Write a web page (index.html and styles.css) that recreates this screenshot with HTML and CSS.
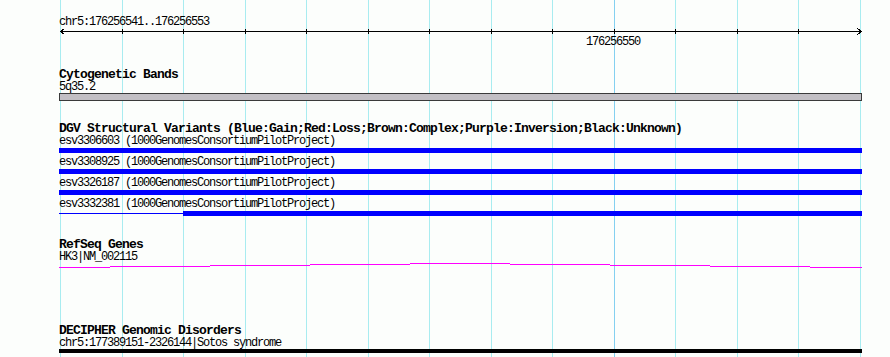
FILE: index.html
```html
<!DOCTYPE html>
<html>
<head>
<meta charset="utf-8">
<title>GBrowse tracks</title>
<link rel="stylesheet" href="styles.css">
</head>
<body>
<div class="page">
  <svg class="grid" width="890" height="357" shape-rendering="crispEdges">
    <g class="minor">
      <line x1="60.5" y1="0" x2="60.5" y2="357"/>
      <line x1="122.5" y1="0" x2="122.5" y2="357"/>
      <line x1="183.5" y1="0" x2="183.5" y2="357"/>
      <line x1="245.5" y1="0" x2="245.5" y2="357"/>
      <line x1="306.5" y1="0" x2="306.5" y2="357"/>
      <line x1="368.5" y1="0" x2="368.5" y2="357"/>
      <line x1="429.5" y1="0" x2="429.5" y2="357"/>
      <line x1="491.5" y1="0" x2="491.5" y2="357"/>
      <line x1="552.5" y1="0" x2="552.5" y2="357"/>
      <line x1="675.5" y1="0" x2="675.5" y2="357"/>
      <line x1="737.5" y1="0" x2="737.5" y2="357"/>
      <line x1="798.5" y1="0" x2="798.5" y2="357"/>
      <line x1="860.5" y1="0" x2="860.5" y2="357"/>
    </g>
    <line class="major" x1="614.5" y1="0" x2="614.5" y2="357"/>
  </svg>

  <div class="tracks">
    <section class="track ruler-track">
      <div class="label">chr5:176256541..176256553</div>
      <svg class="ruler" width="803" height="7" shape-rendering="crispEdges">
        <path d="M1 3.5H803" />
        <path d="M63.5 1V6M124.5 1V6M186.5 1V6M247.5 1V6M309.5 1V6M370.5 1V6M432.5 1V6M493.5 1V6M555.5 1V6M616.5 1V6M678.5 1V6M739.5 1V6"/>
        <polyline points="5.5,0.5 1.5,3.5 5.5,6.5" fill="none"/>
        <polyline points="798.5,0.5 802.5,3.5 798.5,6.5" fill="none"/>
      </svg>
      <div class="label scale-label">176256550</div>
    </section>

    <section class="track cyto-track">
      <h2 class="title">Cytogenetic Bands</h2>
      <div class="label">5q35.2</div>
      <div class="band"></div>
    </section>

    <section class="track dgv-track">
      <h2 class="title">DGV Structural Variants (Blue:Gain;Red:Loss;Brown:Complex;Purple:Inversion;Black:Unknown)</h2>
      <div class="feature">
        <div class="label">esv3306603 (1000GenomesConsortiumPilotProject)</div>
        <div class="bar"></div>
      </div>
      <div class="feature">
        <div class="label">esv3308925 (1000GenomesConsortiumPilotProject)</div>
        <div class="bar"></div>
      </div>
      <div class="feature">
        <div class="label">esv3326187 (1000GenomesConsortiumPilotProject)</div>
        <div class="bar"></div>
      </div>
      <div class="feature">
        <div class="label">esv3332381 (1000GenomesConsortiumPilotProject)</div>
        <div class="bar split">
          <span class="thin"></span>
          <span class="thick"></span>
        </div>
      </div>
    </section>

    <section class="track refseq-track">
      <h2 class="title">RefSeq Genes</h2>
      <div class="label">HK3|NM_002115</div>
      <svg class="gene" width="803" height="5" shape-rendering="crispEdges">
        <path d="M0 4.5H51M51 3.5H151M151 2.5H251M251 1.5H351M351 0.5H451M451 1.5H551M551 2.5H651M651 3.5H751M751 4.5H803"/>
      </svg>
    </section>

    <section class="track decipher-track">
      <h2 class="title">DECIPHER Genomic Disorders</h2>
      <div class="label">chr5:177389151-2326144|Sotos syndrome</div>
      <div class="black-bar"></div>
    </section>
  </div>
</div>
</body>
</html>
```

FILE: styles.css
```css
html, body {
  margin: 0;
  padding: 0;
  background: #fcfefc;
}

.page {
  position: relative;
  width: 890px;
  height: 357px;
  overflow: hidden;
  background: #fcfefc;
  color: #000;
}

.grid {
  position: absolute;
  left: 0;
  top: 0;
}

.grid .minor line {
  stroke: #a8ecf0;
  stroke-width: 1;
}

.grid .major {
  stroke: #84d0f0;
  stroke-width: 1;
}

.tracks {
  position: relative;
  display: flex;
  flex-direction: column;
  padding: 16px 0 0 59px;
  width: 803px;
}

.track {
  display: flex;
  flex-direction: column;
}

.label {
  font-family: "Liberation Mono", "DejaVu Sans Mono", monospace;
  font-size: 12px;
  letter-spacing: -1.2px;
  line-height: 12px;
  height: 12px;
  white-space: pre;
}

.title {
  margin: 0;
  font-family: "Liberation Mono", "DejaVu Sans Mono", monospace;
  font-weight: bold;
  font-size: 13px;
  letter-spacing: -0.8px;
  line-height: 12px;
  height: 12px;
  white-space: pre;
}

.ruler {
  display: block;
  margin-top: 0;
}

.ruler path,
.ruler polyline {
  stroke: #000;
  stroke-width: 1;
}

.scale-label {
  margin-top: 1px;
  padding-left: 527px;
}

.cyto-track {
  margin-top: 21px;
}

.band {
  box-sizing: border-box;
  height: 8px;
  background: #c2bfc4;
  border: 1px solid #3a3a3a;
}

.dgv-track {
  margin-top: 22px;
}

.feature + .feature {
  margin-top: 3px;
}

.bar {
  margin-top: 1px;
  height: 5px;
  background: #0000ff;
}

.bar.split {
  display: flex;
  align-items: center;
  background: transparent;
}

.bar.split .thin {
  width: 124px;
  height: 1px;
  background: #0000ff;
}

.bar.split .thick {
  flex: 1;
  height: 5px;
  background: #0000ff;
}

.refseq-track {
  margin-top: 23px;
}

.gene {
  display: block;
}

.gene path {
  stroke: #ff00ff;
  stroke-width: 1;
  fill: none;
}

.decipher-track {
  margin-top: 57px;
}

.black-bar {
  height: 4px;
  background: #000;
}
```
